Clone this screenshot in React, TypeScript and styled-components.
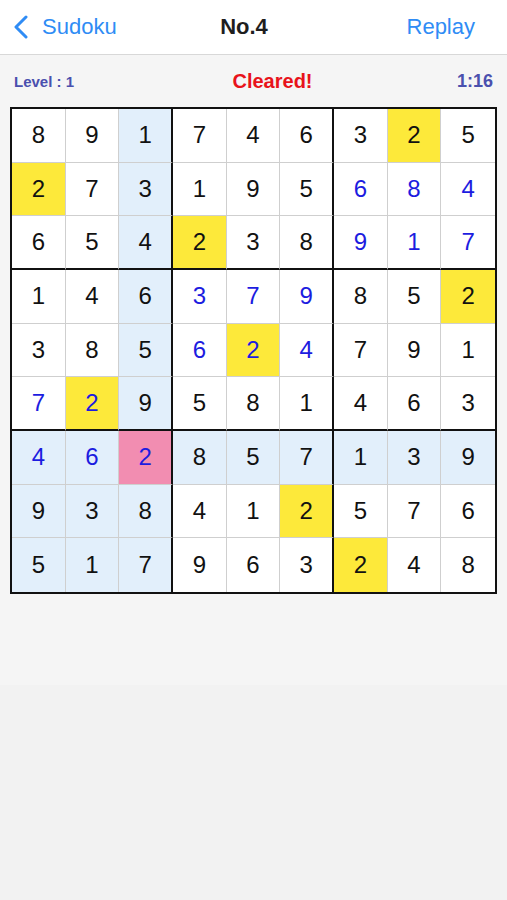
import React from "react";
import styled, { createGlobalStyle } from "styled-components";

const GlobalStyle = createGlobalStyle`
  body {
    margin: 0;
    background: #f2f2f2;
    font-family: "Liberation Sans", Arial, sans-serif;
  }
`;

const BLUE = "#2f8cf5";
const INDIGO = "#4a50ae";

// Y = yellow (same number), L = light blue (row/col/box), P = pink (selected)
const board = [
  "891746325",
  "273195684",
  "654238917",
  "146379852",
  "385624791",
  "729581463",
  "462857139",
  "938412576",
  "517963248",
];

const shades = [
  "..L....Y.",
  "Y.L......",
  "..LY.....",
  "..L.....Y",
  "..L.Y....",
  ".YL......",
  "LLPLLLLLL",
  "LLL..Y...",
  "LLL...Y..",
];

const entered = [
  ".........",
  "......BBB",
  "......BBB",
  "...BBB...",
  "...BBB...",
  "BB.......",
  "BBB......",
  ".........",
  ".........",
];

const fills: Record<string, string> = {
  ".": "#ffffff",
  Y: "#fde93a",
  L: "#e2effb",
  P: "#f28db1",
};

const Page = styled.div`
  display: flex;
  flex-direction: column;
  min-height: 900px;
`;

const NavBar = styled.header`
  height: 54px;
  background: #ffffff;
  border-bottom: 1px solid #d8d8d8;
  display: grid;
  grid-template-columns: 1fr auto 1fr;
  align-items: center;
  padding: 0 32px 0 13px;
`;

const BackButton = styled.div`
  display: flex;
  align-items: center;
  gap: 13px;
  color: ${BLUE};
  font-size: 22px;
`;

const Title = styled.div`
  font-size: 22px;
  font-weight: bold;
  color: #1e1e1e;
`;

const Replay = styled.div`
  justify-self: end;
  color: ${BLUE};
  font-size: 22px;
`;

const Main = styled.main`
  background: #f5f5f5;
  height: 630px;
  padding: 0 10px;
`;

const StatusBar = styled.div`
  height: 52px;
  display: flex;
  align-items: center;
  justify-content: space-between;
  padding: 0 4px;
  font-weight: bold;
`;

const Level = styled.span`
  color: ${INDIGO};
  font-size: 15px;
`;

const Cleared = styled.span`
  color: #e8131b;
  font-size: 20px;
  margin-left: 14px;
`;

const Timer = styled.span`
  color: ${INDIGO};
  font-size: 18px;
`;

const Board = styled.div`
  width: 487px;
  height: 487px;
  box-sizing: border-box;
  border: 2px solid #111;
  display: grid;
  grid-template-columns: repeat(9, 1fr);
  grid-template-rows: repeat(9, 1fr);
`;

const Cell = styled.div<{ $fill: string; $blue: boolean; $col: number; $row: number }>`
  box-sizing: border-box;
  display: flex;
  align-items: center;
  justify-content: center;
  background: ${(p) => p.$fill};
  color: ${(p) => (p.$blue ? "#1c1ce0" : "#111")};
  font-size: 24px;
  border-right: ${(p) =>
    p.$col === 8 ? "none" : p.$col % 3 === 2 ? "2px solid #111" : "1px solid #cfcfcf"};
  border-bottom: ${(p) =>
    p.$row === 8 ? "none" : p.$row % 3 === 2 ? "2px solid #111" : "1px solid #cfcfcf"};
`;

const Chevron = () => (
  <svg width="16" height="24" viewBox="0 0 16 24">
    <polyline
      points="13,2 3,12 13,22"
      fill="none"
      stroke={BLUE}
      strokeWidth="3"
      strokeLinecap="round"
      strokeLinejoin="round"
    />
  </svg>
);

const App: React.FC = () => (
  <Page>
    <GlobalStyle />
    <NavBar>
      <BackButton>
        <Chevron />
        Sudoku
      </BackButton>
      <Title>No.4</Title>
      <Replay>Replay</Replay>
    </NavBar>
    <Main>
      <StatusBar>
        <Level>Level : 1</Level>
        <Cleared>Cleared!</Cleared>
        <Timer>1:16</Timer>
      </StatusBar>
      <Board>
        {board.map((line, r) =>
          line.split("").map((n, c) => (
            <Cell
              key={`${r}-${c}`}
              $row={r}
              $col={c}
              $fill={fills[shades[r][c]]}
              $blue={entered[r][c] === "B"}
            >
              {n}
            </Cell>
          ))
        )}
      </Board>
    </Main>
  </Page>
);

export default App;
